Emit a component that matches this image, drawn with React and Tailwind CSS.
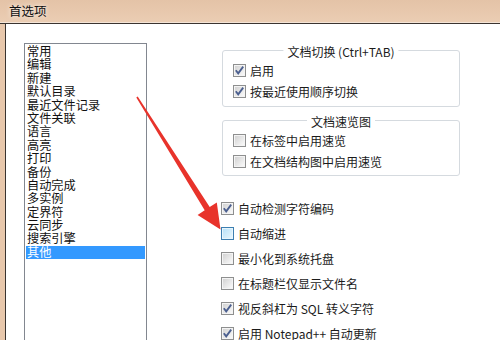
import React from "react";

const items = [
  "常用", "编辑", "新建", "默认目录", "最近文件记录", "文件关联", "语言", "高亮",
  "打印", "备份", "自动完成", "多实例", "定界符", "云同步", "搜索引擎", "其他",
];

function CheckBox({ checked, hover }) {
  return (
    <span
      className={
        "flex w-[13px] h-[13px] shrink-0 border p-px " +
        (hover ? "border-[#3c7fb1] bg-[#e8f6fd]" : "border-[#8e8f8f] bg-[#f4f4f4]")
      }
    >
      <span
        className={
          "relative flex-1 " +
          (hover
            ? "bg-gradient-to-br from-[#b9e3f9] to-[#e6f5fd]"
            : "bg-gradient-to-br from-[#d3d3d3] to-[#f9f9f9]")
        }
      >
        {checked && (
          <svg className="absolute -left-px -top-px" width="11" height="11" viewBox="0 0 11 11">
            <path d="M1.8 5.2 L4.2 8.4 L9.2 1.6" fill="none" stroke="#4b5f8f" strokeWidth="1.8" />
          </svg>
        )}
      </span>
    </span>
  );
}

function Row({ label, checked, hover, h = "h-[21px]" }) {
  return (
    <div className={"flex items-center gap-[4px] " + h}>
      <CheckBox checked={checked} hover={hover} />
      <span className="leading-[16px] whitespace-nowrap">{label}</span>
    </div>
  );
}

function Group({ title, children, className = "" }) {
  return (
    <div className={"relative w-[238px] border border-[#d5dadf] rounded-[3px] pl-[10px] pt-[9px] " + className}>
      <span className="absolute -top-[7px] left-1/2 -translate-x-1/2 bg-white px-[4px] leading-[16px] whitespace-nowrap">
        {title}
      </span>
      {children}
    </div>
  );
}

export default function App() {
  return (
    <div className="relative w-[500px] h-[340px] overflow-hidden bg-white text-[12px] text-[#1b1b1b] font-['Noto_Sans_CJK_SC','Noto_Sans',sans-serif]">
      {/* title bar */}
      <div className="h-[22px] bg-gradient-to-b from-[#e4c3a7] to-[#ebcdb3] flex items-center pl-[9px]">
        <span className="text-[12.5px] leading-[16px] text-[#101010] [text-shadow:0_0_5px_#fff]">首选项</span>
      </div>
      <div className="h-px bg-[#f4e4d6]" />
      <div className="h-px bg-[#3a3430]" />

      <div className="flex h-[316px]">
        <div className="w-[5px] bg-[#e8c8ac]" />
        <div className="w-px bg-[#3a3430]" />

        <div className="flex-1 flex pl-[18px] pt-[19px]">
          {/* category list */}
          <div className="w-[123px] h-[320px] border border-[#828790] px-px pt-px">
            {items.map((it) => (
              <div
                key={it}
                className={
                  "h-[13.4px] leading-[13.4px] pl-px text-[12.2px] whitespace-nowrap " +
                  (it === "其他" ? "bg-[#3399ff] text-white" : "text-[#111]")
                }
              >
                {it}
              </div>
            ))}
          </div>

          {/* options */}
          <div className="ml-[75px] mt-[7px] flex flex-col">
            <Group title="文档切换 (Ctrl+TAB)" className="pb-[4px]">
              <Row label="启用" checked />
              <Row label="按最近使用顺序切换" checked />
            </Group>
            <Group title="文档速览图" className="mt-[13px] pb-[3px]">
              <Row label="在标签中启用速览" />
              <Row label="在文档结构图中启用速览" />
            </Group>
            <div className="mt-[20px] -ml-px flex flex-col">
              <Row h="h-[25px]" label="自动检测字符编码" checked />
              <Row h="h-[25px]" label="自动缩进" hover />
              <Row h="h-[25px]" label="最小化到系统托盘" />
              <Row h="h-[25px]" label="在标题栏仅显示文件名" />
              <Row h="h-[25px]" label="视反斜杠为 SQL 转义字符" checked />
              <Row h="h-[25px]" label="启用 Notepad++ 自动更新" checked />
            </div>
          </div>
        </div>
      </div>

      {/* red annotation arrow */}
      <svg className="absolute left-0 top-0 pointer-events-none" width="500" height="340" viewBox="0 0 500 340">
        <polygon
          points="137.7,96.6 209.7,207.1 216.8,202.4 220.5,229.5 197.6,215 204.7,210.3 136.3,97.4"
          fill="#e8332b"
        />
      </svg>
    </div>
  );
}
